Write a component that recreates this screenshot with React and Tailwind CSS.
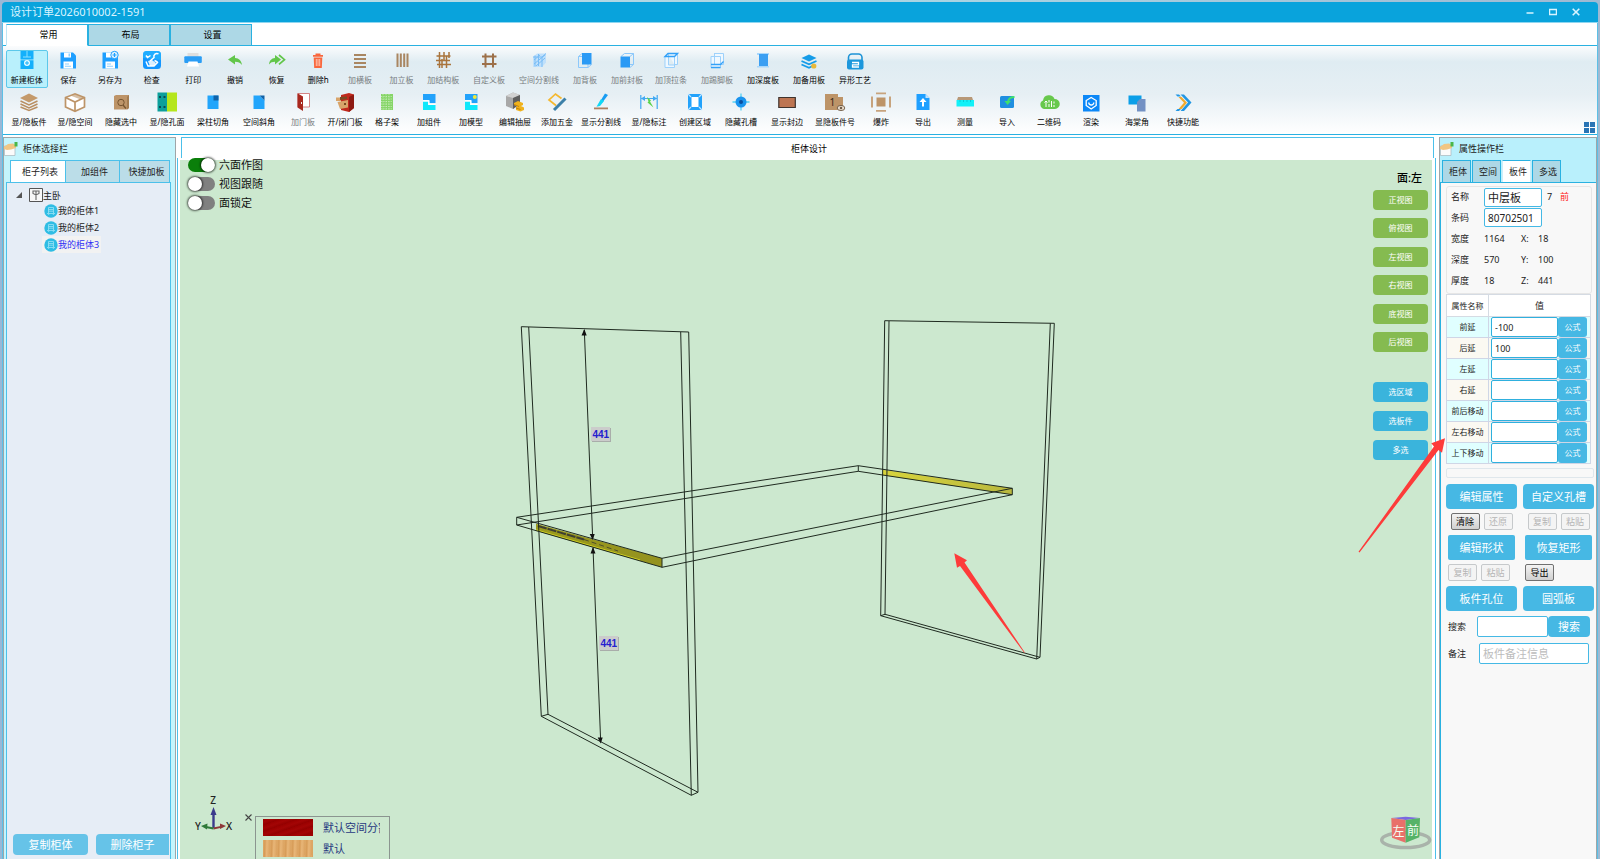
import React, { useState } from "react";

const BROWN = "#a98661";
const BLUE = "#1e9fff";

// All toolbar icons share an 18x18 box
const icons = {
  newCabinet: (
    <>
      <path fill="#14b0fb" d="M2.500 0h13v8.500h-13zM2.500 9.300h13V18h-13z" />
      <path stroke="#8be0ff" strokeWidth="1" d="M9 0v6M5 6h8" />
      <circle cx="9" cy="12" r="3" fill="#e9faff" />
      <path stroke="#14b0fb" d="M7 12h4M9 10v4" />
    </>
  ),
  save: (
    <>
      <path fill={BLUE} d="M1.500 1.500h12.500l3 3v13h-15.500z" />
      <path fill="#fff" d="M5 1.500h7v5h-7zM4.500 10.500h9.500v7h-9.500z" />
      <path fill={BLUE} d="M9.500 2.500h1.500v3h-1.500zM6 12.500h4v1h-4zM6 14.800h6v1h-6z" opacity=".5" />
    </>
  ),
  saveAs: (
    <>
      <path fill={BLUE} d="M1.500 1.500h12.500l3 3v13h-15.500z" />
      <path fill="#fff" d="M5 1.500h6v5h-6zM4.500 10.500h9.500v7h-9.500z" />
      <path fill={BLUE} d="M6 12.500h4v1h-4zM6 14.800h6v1h-6z" opacity=".5" />
      <circle cx="13.500" cy="4" r="3.700" fill="#e3f5ff" stroke={BLUE} strokeWidth="1" />
      <path stroke={BLUE} strokeWidth="1.200" d="M13.500 2v4M11.500 4h4" />
    </>
  ),
  check: (
    <>
      <rect width="18" height="18" rx="3.500" fill="#1496ff" />
      <path fill="#2cc4ff" opacity=".5" d="M3.500 0h11a3.500 3.500 0 0 1 3.500 3.500V9L0 7V3.500A3.500 3.500 0 0 1 3.500 0z" />
      <path fill="none" stroke="#fff" strokeWidth="1.500" d="M3 4.500l1.500 2 3-2M15.500 3a3 3 0 0 0-4.500 3.500L7 10M3 10.500l2 4.500h6l4-4M11.500 9.500l3 1.500" />
      <path fill="#fff" d="M5 10l4-1 4 3-2 3H7z" opacity=".85" />
    </>
  ),
  print: (
    <>
      <path fill="#dedede" d="M3.500 2h11v4h-11z" />
      <rect x=".3" y="5.300" width="17.500" height="6.700" rx="1" fill="#2a9df5" />
      <path fill="#fff" d="M4.500 10.500h9l1.500 5H3z" />
    </>
  ),
  undo: <path fill="#62c64a" d="M2 8.500L9 4v3c4 .2 6.500 2.800 7 7-1.800-2.400-3.800-3.200-7-3.200V13.500z" />,
  redo: (
    <>
      <path fill="#62c64a" d="M13 8.500L7 4v3C3.500 7.200 1.300 9.800 1 13.500c1.600-2 3.400-2.700 6-2.700v2.700z" />
      <path fill="none" stroke="#62c64a" strokeWidth="1.700" d="M11 4l5.500 4.700-5.500 4.700" />
    </>
  ),
  trash: (
    <>
      <path fill="#f9673d" d="M4 4h10v1.800H4zM6.500 2.500h5V4h-5zM4.700 6.500h8.600l-.5 10.500H5.200z" />
      <path stroke="#ffd9cc" d="M7.300 8v7M9 8v7M10.700 8v7" strokeWidth=".8" />
    </>
  ),
  rows: <path fill={BROWN} d="M3 3h12v2H3zM3 7h12v2H3zM3 11h12v2H3zM3 15h12v2H3z" />,
  cols: <path fill={BROWN} d="M3.500 2.500h2v13.500h-2zM6.800 2.500h2v13.500h-2zM10.200 2.500h2v13.500h-2zM13.500 2.500h2v13.500h-2z" />,
  lattice: <path stroke="#a9743c" strokeWidth="1.500" d="M5.500 1v16M10 1v9M12.500 5v12M15 1v6M8 8v9M2.500 5h14M2 9.500h14M3 13.500h14" />,
  hash: <path stroke="#9c7049" strokeWidth="2" d="M5.500 2.500v14M13 2.500v14M2 5.500h14.500M2 13h14.500" />,
  hatchBox: (
    <>
      <path fill="#bfe0fb" d="M3 6l4-3.500h9v9L12 16H3z" />
      <path stroke="#79bdf6" strokeWidth="1" fill="none" d="M3 6h9v10M12 6l4-3.500M4 9l6-5M4 13L15 4M6 15l9-8M5 4.500v11M8.500 3v12" />
    </>
  ),
  boxBack: (
    <>
      <path fill="none" stroke="#8cc8fb" d="M2.500 5.500h9.500v11H2.500zM2.500 5.500L6 2.500M12 16.500l3.500-3" />
      <path fill="#2a9af5" d="M6 2h9.500v11.500H6z" />
    </>
  ),
  boxFront: (
    <>
      <path fill="none" stroke="#8cc8fb" d="M6.500 2.500h9v11h-9M3 5.500l3.500-3M12 5.500l3.500-3M12 16.500l3.500-3" />
      <path fill="#2a9af5" d="M2.500 5.500h9.500v11H2.500z" />
    </>
  ),
  boxTop: (
    <>
      <path fill="#eff8ff" stroke="#9dd1fb" d="M3 5.500h9.500v11H3zM6 2.500h9.500v11h-3M6.500 3v11h6" />
      <path stroke="#33a1f8" strokeWidth="1.400" d="M3 5.500h9.500l3-3H6z" fill="none" />
    </>
  ),
  boxKick: (
    <>
      <path fill="#eff8ff" stroke="#9dd1fb" d="M3 5.500h9.500v11H3zM6 2.500h9.500v11h-3M6.500 3v11" />
      <path stroke="#33a1f8" strokeWidth="1.300" d="M3 13.500h9.500l3-3M3 16.500h9.500" fill="none" />
    </>
  ),
  column: (
    <>
      <path fill="#a9d7fb" d="M3 2h12v2H3zM3 15h12v1.500H3z" />
      <path fill="#3b9ff2" d="M5 3h9v12H5z" />
    </>
  ),
  layersBlue: (
    <>
      <path fill="#159ce8" d="M1.500 7l7.500-3.500L16.500 7 9 10.500z" />
      <path fill="none" stroke="#159ce8" strokeWidth="1.800" d="M1.500 10L9 13.300 16.500 10M1.500 13.500L9 16.800l4-2" />
      <circle cx="13.800" cy="15" r="2.600" fill="#e9b93a" />
    </>
  ),
  basket: (
    <>
      <path fill="none" stroke="#1c93d6" strokeWidth="1.600" d="M2.500 9V6.500a3.500 3.500 0 0 1 3.500-3.500h6.500a3.500 3.500 0 0 1 3.500 3.500V9" />
      <rect x="1" y="8.500" width="16.500" height="10" rx="2" fill="#1c97dc" />
      <path fill="none" stroke="#fff" strokeWidth="1.300" d="M6 11.500h6.500v2.300H6.500V16h6.500" />
    </>
  ),
  layers: (
    <>
      <path fill="#c49a6b" d="M0 5l9-4.500L18 5 9 9.500z" />
      <path fill="none" stroke="#b98f62" strokeWidth="1.500" d="M.5 8L9 12l8.500-4M.5 11L9 15l8.500-4M.5 14L9 17.500 17.500 14" />
    </>
  ),
  cube: (
    <>
      <path fill="#fff" stroke="#bd9468" strokeWidth="1.700" d="M-.5 4.500L9 .8l9.500 3.700V14L9 18.300-.5 14z" />
      <path fill="none" stroke="#bd9468" strokeWidth="1.700" d="M-.5 4.500L9 9l9.500-4.500M9 9v9" />
      <path fill="#bd9468" d="M9 1l9 3.500-4 1.800-9-3.600z" opacity=".6" />
    </>
  ),
  hideSel: (
    <>
      <path fill="#bd9468" d="M2 3l2-1h13v13l-2 1.500H2z" />
      <path fill="#a37c50" d="M15 4l2-2v13l-2 1.500z" />
      <circle cx="9" cy="9.500" r="3.200" fill="none" stroke="#76542f" strokeWidth="1" />
      <path stroke="#76542f" strokeWidth="1.300" d="M11 12l3 3.500" />
    </>
  ),
  holes: (
    <>
      <path fill="#0d9f9b" d="M-.5-.5h9.500v19h-9.500z" />
      <path fill="#b5e61d" d="M9-.5h10v19H9z" />
      <path fill="#0a4a55" d="M1 3h2v2H1zM5.500 3h2v2h-2zM1 13h2v2H1zM5.500 13h2v2h-2z" />
    </>
  ),
  notch: (
    <>
      <path fill="#22a5fb" d="M3.500 2.500h11v13.500h-11z" />
      <path fill="#0f62a8" d="M9.500 2.500h5v5h-5z" />
    </>
  ),
  bevel: (
    <>
      <path fill="#22a5fb" d="M3.500 2.500h6l5 5V16h-11z" />
      <path fill="#0f62a8" d="M9.500 2.500h5v5z" />
    </>
  ),
  door: (
    <>
      <path fill="#fff" stroke="#c66" strokeWidth=".8" d="M4 .5h11.500v13.500H4z" />
      <path fill="#a8281e" d="M3.500.3L9 3.500V18l-5.500-3.500z" />
      <path fill="#eee" d="M7 9h1v2H7z" />
    </>
  ),
  doorOpen: (
    <>
      <path fill="#c0281c" d="M5 2l8-2 5 1.500V15l-5 4-8-2z" />
      <path fill="#8d1a12" d="M13 4l5-2.500V15l-5 4z" />
      <path fill="#d8a46a" d="M0 4.500h5v3.500H0zM1.500 9L12 7v7.500L4 16z" />
      <path fill="#7a4a22" d="M4 4l7-.500v2.500l-7 1zM8 10h2v2H8z" />
    </>
  ),
  grid: (
    <>
      <path fill="#86d568" d="M3 1h12v16H3z" />
      <path stroke="#d4f2c8" strokeWidth=".7" strokeDasharray="1.200 1.200" d="M3 3.500h12M3 6h12M3 8.500h12M3 11h12M3 13.500h12M3 15.800h12M5 1v16M8 1v16M11 1v16" />
    </>
  ),
  component: (
    <>
      <path fill="#22a2fb" d="M3 1h12.500v9H9V7H3z" />
      <path fill="#10e8fb" d="M3 8.500h5V12h7.500v5H3z" />
      <path fill="none" stroke="#fff" strokeWidth="1.200" d="M3 7.800h6v3.700h6.500" />
    </>
  ),
  model: (
    <>
      <path fill="#22a2fb" d="M3 1h12.500v9H9V7H3z" />
      <path fill="#10e8fb" d="M3 8.500h5V12h7.500v5H3z" />
      <path fill="none" stroke="#fff" strokeWidth="1.200" d="M3 7.800h6v3.700h6.500" />
      <circle cx="12.800" cy="4" r="2" fill="#f0e93a" />
    </>
  ),
  drawer: (
    <>
      <path fill="#a8a8a8" d="M0 3l7-3.500L14 2v9l-7 5-7-3z" />
      <path fill="#d2d2d2" d="M0 3l7-3.500L14 2 7 5z" />
      <path fill="#5f5f5f" d="M7 5l7-3v9l-7 5z" />
      <path fill="#f0b21c" d="M8 10l4-2 5 2v2l-4 2-5-2zM10 14l4-1.500 4 2V17l-3.500 1.500L10 17z" />
      <path fill="#c58308" d="M8 12l5 2v-1l-5-2zM10 15.500l4.500 1.500V16L10 14.500z" />
    </>
  ),
  hardware: (
    <>
      <path fill="none" stroke="#f5b82e" strokeWidth="1.700" d="M8 12.500L1 7l6.500-6 6 4.500" />
      <path stroke="#3c80a8" strokeWidth="3" d="M6 17L17.500 5.500" />
    </>
  ),
  splitLine: (
    <>
      <path fill="#189cf2" d="M13 .5l3 1.500-6 8-3.500 1z" />
      <path fill="#10d8f5" d="M9 6l3 2-4 5-3.500.8z" />
      <path fill="#ad7f5f" d="M2 14.500h14v1.800H2z" />
    </>
  ),
  dimension: (
    <>
      <path stroke="#41a9f2" strokeWidth="1.200" d="M.8 2v14M17.200 2v14M1.500 5.500h15" />
      <path fill="#41a9f2" d="M1 5.500l4-2.500v5zM17 5.500L13 3v5z" />
      <path fill="#5bd34c" d="M7 4l4 3.500-1 1 3.500 6-6-5 1-1z" />
    </>
  ),
  region: (
    <>
      <path fill="#22a2fb" d="M2 1h14v16H2z" />
      <path fill="#fff" d="M5.500 4h7v10h-7z" />
      <path stroke="#bfe4ff" strokeWidth="1.200" d="M2 1l3 3M16 1l-3 3M2 17l3-3M16 17l-3-3" />
    </>
  ),
  slot: (
    <>
      <path stroke="#55d2f5" strokeWidth="1.300" d="M9 .5v17M.5 9h17" />
      <circle cx="9" cy="9" r="5.500" fill="#1a94ee" />
      <circle cx="9" cy="9" r="2" fill="#0a4f9e" />
    </>
  ),
  edge: <path fill="#bd7552" stroke="#3f342e" strokeWidth="1.200" d="M.8 4.500h16.500v10H.8z" />,
  boardNo: (
    <>
      <path fill="#bd9468" d="M-1 1h13v3h5v13H-1z" />
      <text x="3.500" y="12.500" fontSize="10" fill="#33251a">1</text>
      <ellipse cx="15" cy="15" rx="3.800" ry="2.600" fill="#e6d9c8" stroke="#6f5b46" strokeWidth=".9" />
      <circle cx="15" cy="15" r="1.200" fill="#6f5b46" />
    </>
  ),
  explode: (
    <>
      <path fill="#bd9468" d="M4.500 4.500h9v9h-9z" />
      <path fill="#c7a37d" d="M4-.5h10v1.800H4zM4 17h10v1.800H4zM-1 3.500h2v11h-2zM17 3.500h2v11h-2z" />
    </>
  ),
  exportFile: (
    <>
      <path fill={BLUE} d="M2.500 1h9l4 4v12h-13z" />
      <path fill="#bfe2ff" d="M11.500 1l4 4h-4z" />
      <path fill="#fff" d="M9 5l3.500 4H10v4.500H8V9H5.500z" />
    </>
  ),
  measure: (
    <>
      <path fill="#b79877" d="M2 4h14l1 3H1z" />
      <path fill="#12f1f8" d="M.5 7h17.500v6.500H.5z" />
      <path stroke="#06b9c6" strokeWidth=".7" d="M4 7v2M7.500 7v2M11 7v2M14.500 7v2" />
    </>
  ),
  importFile: (
    <>
      <rect x="2" y="3" width="14" height="12" rx="1.500" fill="#1f8fe0" />
      <path fill="none" stroke="#3fe06c" strokeWidth="2" d="M16.500 4c-4 0-6 1-6.500 5" />
      <path fill="#3fe06c" d="M6.500 8h6.500L9.500 12z" />
    </>
  ),
  qrCloud: (
    <>
      <path fill="#67c84c" d="M4 16a4.500 4.500 0 0 1-1-8.500A6 6 0 0 1 14.500 6 5 5 0 0 1 15 16z" />
      <path stroke="#fff" strokeWidth="1" d="M6 14V8M4.500 9.500L6 8l1.500 1.500M9 7v2.500M9 11v3M11.500 8v6M14 8.500v2M14 12v2" />
    </>
  ),
  render: (
    <>
      <path fill="#0b87f7" d="M1 2h16.500v16.500H1z" />
      <path fill="none" stroke="#fff" strokeWidth="1.300" d="M9.200 4.500l5 3v5l-5 3.500-5-3.500v-5z" />
      <path fill="none" stroke="#fff" strokeWidth="1.300" d="M6.800 9.500a2.500 2.500 0 0 0 5 0" />
    </>
  ),
  begonia: (
    <>
      <path fill="#0b9fe8" d="M.5 2.500h13v9H.5z" />
      <path fill="#7391c4" d="M12 6h5.500v12.500H9V9z" />
    </>
  ),
  chevrons: (
    <>
      <path fill="#2196e3" d="M6.500 1.500h3.500l7.500 8-7.500 8.500H6.500l7.500-8.500z" />
      <path fill="#f0a92c" d="M4.500 4h3l5.500 5.700L7.500 16h-3l5.500-6.300z" />
      <path fill="#2196e3" d="M1.500 1.500h3.500l2 2H3.500zM1.500 18h3.500l2-2H3.500z" />
    </>
  ),
};

const toolsStart = [
  { label: "新建柜体", icon: "newCabinet", active: true },
  { label: "保存", icon: "save" },
  { label: "另存为", icon: "saveAs" },
  { label: "检查", icon: "check" },
  { label: "打印", icon: "print" },
  { label: "撤销", icon: "undo" },
  { label: "恢复", icon: "redo" },
  { label: "删除h", icon: "trash" },
  { label: "加横板", icon: "rows", disabled: true },
  { label: "加立板", icon: "cols", disabled: true },
  { label: "加结构板", icon: "lattice", disabled: true },
];

const toolsBoards = [
  { label: "自定义板", icon: "hash", disabled: true, width: "w-[50px]" },
  { label: "空间分割线", icon: "hatchBox", disabled: true, width: "w-[50px]" },
  { label: "加背板", icon: "boxBack", disabled: true, width: "w-[42px]" },
  { label: "加前封板", icon: "boxFront", disabled: true, width: "w-[42px]" },
  { label: "加顶拉条", icon: "boxTop", disabled: true, width: "w-[46px]" },
  { label: "加踢脚板", icon: "boxKick", disabled: true, width: "w-[46px]" },
  { label: "加深度板", icon: "column", width: "w-[46px]" },
  { label: "加备用板", icon: "layersBlue", width: "w-[46px]" },
  { label: "异形工艺", icon: "basket", width: "w-[46px]" },
];

const toolsSecond = [
  { label: "显/隐板件", icon: "layers", width: "w-[46px]" },
  { label: "显/隐空间", icon: "cube", width: "w-[46px]" },
  { label: "隐藏选中", icon: "hideSel", width: "w-[46px]" },
  { label: "显/隐孔面", icon: "holes", width: "w-[46px]" },
  { label: "梁柱切角", icon: "notch", width: "w-[46px]" },
  { label: "空间斜角", icon: "bevel", width: "w-[46px]" },
  { label: "加门板", icon: "door", disabled: true, width: "w-[42px]" },
  { label: "开/闭门板", icon: "doorOpen", width: "w-[42px]" },
  { label: "格子架", icon: "grid", width: "w-[42px]" },
  { label: "加组件", icon: "component", width: "w-[42px]" },
  { label: "加模型", icon: "model", width: "w-[42px]" },
  { label: "编辑抽屉", icon: "drawer", width: "w-[46px]" },
  { label: "添加五金", icon: "hardware", width: "w-[38px]" },
  { label: "显示分割线", icon: "splitLine", width: "w-[50px]" },
  { label: "显/隐标注", icon: "dimension", width: "w-[46px]" },
  { label: "创建区域", icon: "region", width: "w-[46px]" },
  { label: "隐藏孔槽", icon: "slot", width: "w-[46px]" },
  { label: "显示封边", icon: "edge", width: "w-[46px]" },
  { label: "显隐板件号", icon: "boardNo", width: "w-[50px]" },
  { label: "爆炸", icon: "explode", width: "w-[42px]" },
  { label: "导出", icon: "exportFile", width: "w-[42px]" },
  { label: "测量", icon: "measure", width: "w-[42px]" },
  { label: "导入", icon: "importFile", width: "w-[42px]" },
  { label: "二维码", icon: "qrCloud", width: "w-[42px]" },
  { label: "渲染", icon: "render", width: "w-[42px]" },
  { label: "海棠角", icon: "begonia", width: "w-[50px]" },
  { label: "快捷功能", icon: "chevrons", width: "w-[42px]" },
];

const ToolButton = ({ label, icon, active, disabled, width = "w-full" }) => (
  <button
    disabled={disabled}
    className={`flex h-[38px] shrink-0 flex-col items-center gap-[6px] rounded-[2px] border text-[8px] leading-[10px] whitespace-nowrap ${width} ${
      active ? "border-[#5cc8ea] bg-[#b9f0fc]" : "border-transparent"
    } ${disabled ? "text-[#777c80]" : "text-black"}`}
  >
    <svg viewBox="0 0 18 18" fill="none" className="h-[18px] w-[18px] overflow-visible">
      {icons[icon]}
    </svg>
    {label}
  </button>
);

const TitleBar = () => (
  <header className="flex h-[21px] shrink-0 items-center justify-between rounded-t-[4px] border-b border-[#8fd6f0] bg-[#09a3dc] pr-[11px] pl-2 text-white">
    <h1 className="text-[11px] leading-[20px] text-[#d9f4ff]">设计订单2026010002-1591</h1>
    <div className="flex">
      <button aria-label="最小化" className="flex h-5 w-[23px] items-center justify-center">
        <svg viewBox="0 0 8 8" className="h-2 w-2"><path d="M.5 5h7" stroke="#d9f4ff" strokeWidth="1.500" /></svg>
      </button>
      <button aria-label="最大化" className="flex h-5 w-[23px] items-center justify-center">
        <svg viewBox="0 0 8 8" className="h-2 w-2"><path d="M.5 1.500h7v5h-7z" fill="none" stroke="#d9f4ff" strokeWidth="1.500" /></svg>
      </button>
      <button aria-label="关闭" className="flex h-5 w-[23px] items-center justify-center">
        <svg viewBox="0 0 8 8" className="h-2 w-2"><path d="M.7.7l6.600 6.600M7.300.7L.7 7.300" stroke="#d9f4ff" strokeWidth="1.600" /></svg>
      </button>
    </div>
  </header>
);

const Ribbon = () => {
  const [tab, setTab] = useState("常用");
  return (
    <div className="shrink-0 bg-white">
      <nav className="flex h-[23px] border-b border-[#29b1e1] pt-[1px] pl-[3px]">
        {["常用", "布局", "设置"].map((name) => (
          <button
            key={name}
            onClick={() => setTab(name)}
            className={`-mb-px w-[82px] border border-[#29b1e1] pl-[3px] text-[9px] leading-[12px] text-black ${
              tab === name ? "border-b-white border-l-[#bfe6f5] bg-white" : "bg-[#add8e6]"
            }`}
          >
            {name}
          </button>
        ))}
      </nav>
      <div className="relative flex flex-col gap-1 border-b border-[#29b1e1] bg-[linear-gradient(to_bottom,#fbfcfd,#dfecf2_18%,#e6eff4_55%,#ffffff)] py-1 pl-[3px]">
        <div className="flex">
          <div className="grid w-[458px] shrink-0 grid-cols-11">
            {toolsStart.map((t) => (
              <ToolButton key={t.label} {...t} />
            ))}
          </div>
          {toolsBoards.map((t) => (
            <ToolButton key={t.label} {...t} />
          ))}
        </div>
        <div className="flex">
          {toolsSecond.map((t) => (
            <ToolButton key={t.label} {...t} />
          ))}
        </div>
        <button aria-label="面板" className="absolute right-[2px] bottom-[1px]">
          <svg viewBox="0 0 11 11" className="h-[11px] w-[11px]">
            <path fill="#2a75b5" d="M0 0h5v5H0zM6 0h5v5H6zM0 6h5v5H0zM6 6h5v5H6z" />
          </svg>
        </button>
      </div>
    </div>
  );
};

const PanelHeader = ({ title }) => (
  <div className="flex h-[22px] shrink-0 items-center gap-[5px]">
    <svg viewBox="0 0 14 14" className="h-[14px] w-[14px] overflow-visible">
      <path fill="#fbfbfb" stroke="#a9b6bb" strokeWidth=".7" d="M.5 4h10.500v9.500H.5z" />
      <path fill="#f1c683" d="M0 5l4-3 5-.500 3 1.500v3L7 7.500 3 8 0 7z" />
      <path fill="#49b649" d="M10.500 0h3v4.500h-3z" />
    </svg>
    <h2 className="text-[9px] leading-[12px] text-[#222]">{title}</h2>
  </div>
);

const CabinetIcon = () => (
  <svg viewBox="0 0 14 14" className="h-[14px] w-[14px] shrink-0">
    <circle cx="7" cy="7" r="6.700" fill="#2fbde4" />
    <path fill="none" stroke="#9be2f5" strokeWidth=".8" d="M4.500 9V3.500h5V9M4.500 5.500h5M4.500 7.200h5M3 9.500h8M5 9.500L4.500 11M9 9.500l.5 1.500" />
  </svg>
);

const LeftPanel = () => {
  const [selected, setSelected] = useState("我的柜体3");
  return (
    <aside className="flex w-[173px] shrink-0 flex-col border border-b-0 border-[#9fa5a8] bg-[#c4f4fc]">
      <PanelHeader title="柜体选择栏" />
      <div className="flex h-[22px] shrink-0 pl-[6px] text-[9px] leading-[12px] text-[#222]">
        <button className="w-[56px] border border-b-0 border-[#4cc0ea] bg-white pl-1">柜子列表</button>
        <button className="w-[54px] border border-b-0 border-l-0 border-[#4cc0ea] bg-[#bbdde8] pl-1">加组件</button>
        <button className="w-[50px] border border-b-0 border-l-0 border-[#4cc0ea] bg-[#bbdde8] pl-1">快捷加板</button>
      </div>
      <div className="mr-[4px] ml-[2px] flex grow flex-col border border-b-0 border-[#4cc0ea] bg-[#e6edf6] text-[9px] leading-[13px] text-[#222]">
        <div className="flex items-center pt-[5px] pl-[9px]">
          <svg viewBox="0 0 6 6" className="mr-[7px] h-[6px] w-[6px]"><path fill="#555" d="M6 0v6H0z" /></svg>
          <svg viewBox="0 0 14 14" className="h-[14px] w-[14px]">
            <path fill="#f7f7f7" stroke="#555" d="M.5.5h13v13H.5z" />
            <path fill="none" stroke="#666" strokeWidth="1.100" d="M4 3h6v2.500L7 7 4 5.500zM7 3v9" />
          </svg>
          主卧
        </div>
        <ul className="ml-[35px] flex flex-col items-start">
          {["我的柜体1", "我的柜体2", "我的柜体3"].map((name) => (
            <li key={name}>
              <button
                onClick={() => setSelected(name)}
                className={`flex h-[17px] items-center pr-[2px] pl-[2px] ${
                  selected === name ? "bg-[#f2f2f2] text-[#2f2ff5]" : ""
                }`}
              >
                <CabinetIcon />
                {name}
              </button>
            </li>
          ))}
        </ul>
        <div className="mt-auto mb-1 flex gap-2 pl-[6px] text-[11px] leading-[21px] text-white">
          <button className="w-[75px] rounded-[4px] bg-[#66c3e8]">复制柜体</button>
          <button className="w-[73px] rounded-l-[4px] bg-[#66c3e8]">删除柜子</button>
        </div>
      </div>
    </aside>
  );
};

// Wireframe of the two side boards with the middle shelf
const Scene = () => (
  <svg viewBox="180 160 1252 699" preserveAspectRatio="xMidYMid meet" className="absolute inset-0 h-full w-full">
    <defs>
      <linearGradient id="shelfLeft" x1="0" x2="1">
        <stop offset="0" stopColor="#9b9a1c" />
        <stop offset="1" stopColor="#94921f" />
      </linearGradient>
      <linearGradient id="shelfRight" x1="0" x2="1">
        <stop offset="0" stopColor="#d8d43c" />
        <stop offset="1" stopColor="#b9b83f" />
      </linearGradient>
    </defs>
    <path fill="url(#shelfLeft)" d="M536 523.700L662 558.300V567.300L536 530.700z" />
    <path stroke="#cfd022" strokeWidth="1.200" d="M536 529.800L640 560" />
    <path stroke="#3e3f32" strokeWidth="2" strokeDasharray="9 1" d="M538 526L584 539.500" />
    <path stroke="#4e4e2c" strokeWidth="1" strokeDasharray="5 3" d="M584 539.500L618 551" />
    <path fill="url(#shelfRight)" d="M882.700 469.700L1012.300 488.300V494.700L882.700 475.300z" />
    <g fill="none" stroke="#1f2a20" strokeWidth="1">
      <path d="M521.300 326.700L688.700 332L698 792.300L691.300 795.300L541.300 716.300z" />
      <path d="M528.700 327L548 714.300L698 792.300M541.300 716.300L548 714.300M680.700 332L691.300 795.300" />
      <path d="M884.700 320.700L1054.300 323.300L1040 657.300L1036.700 659L880.700 615.700z" />
      <path d="M889 321L885 614.300L1040 657.300M880.700 615.700L885 614.300M1050.300 323.300L1036.700 659" />
      <path d="M516.700 517.300L858.300 465.700L1012.300 488.300L662 558.300zM516.700 525L858.300 471.300L1012.300 494.700L662 567.300z" />
      <path d="M516.700 517.300V525M858.300 465.700V471.300M1012.300 488.300V494.700M662 558.300V567.300" />
      <path d="M584.300 330L592.700 538.700M593 548L600.700 742" />
    </g>
    <path fill="#111" d="M584.300 329l-2.800 6.500h5.200zM592.700 540l-3-6h5zM593 547l-2.500 6.500h5zM600.700 743.500l-3-6h5z" />
    <g fontFamily="Liberation Sans, sans-serif" fontSize="10" fontWeight="700" fill="#2420cf">
      <rect x="592" y="428" width="19" height="14" fill="#a9adaa" />
      <rect x="591" y="427" width="19" height="14" fill="#cbcccb" />
      <text x="592.500" y="438">441</text>
      <rect x="600" y="637" width="19" height="14" fill="#a9adaa" />
      <rect x="599" y="636" width="19" height="14" fill="#cbcccb" />
      <text x="600.500" y="647">441</text>
    </g>
    {/* axis gizmo */}
    <path stroke="#3a3a8c" strokeWidth="2.400" d="M213.500 828V812" />
    <path fill="#3a3a8c" d="M213.500 807l-3 8h6z" />
    <path stroke="#8e3838" strokeWidth="1.800" d="M213.500 828.500L221 826.800" />
    <path fill="#8e3838" d="M226 826l-6-2.500v5.500z" />
    <path stroke="#2f7a3a" strokeWidth="1.800" d="M213.500 828.500L206 827" />
    <path fill="#2f7a3a" d="M201 826l6.500-2.500-.5 6z" />
    <g fontSize="10" fontWeight="500" fill="#222" textAnchor="middle">
      <text x="213" y="804">Z</text>
      <text x="198" y="830">Y</text>
      <text x="229" y="830">X</text>
    </g>
    {/* view cube */}
    <ellipse cx="1405.700" cy="840" rx="24" ry="7.500" fill="none" stroke="#a9b3aa" strokeWidth="3.500" />
    <path fill="#7a68e0" d="M1391.300 818L1405.700 816.800L1420 818L1405.700 820z" />
    <path fill="#e8706a" d="M1391.300 818L1405.700 820V842.700L1392 837.700z" />
    <path fill="#55b368" d="M1405.700 820L1420 818L1419.300 837.300L1405.700 842.700z" />
    <g fontSize="12" fill="#f4fff4" textAnchor="middle">
      <text x="1398.500" y="836">左</text>
      <text x="1413" y="835">前</text>
    </g>
  </svg>
);

const Toggle = ({ label, defaultChecked }) => (
  <label className="flex h-[19px] items-center gap-1 text-[11px] leading-[14px] text-[#111]">
    <input
      type="checkbox"
      defaultChecked={defaultChecked}
      className="h-[14px] w-[27px] appearance-none rounded-full bg-[#808080] before:block before:h-[14px] before:w-[14px] before:rounded-full before:bg-white before:shadow-[0_0_2px_1px_rgba(0,0,0,0.6)] checked:bg-[#0a7f0a] checked:before:ml-[13px]"
    />
    {label}
  </label>
);

const Viewport = () => (
  <main className="ml-[1px] flex min-w-0 grow flex-col">
    <div className="mr-[2px] ml-1 h-[21px] shrink-0 border border-b-0 border-[#4cc0ea] bg-white pl-[3px] text-center text-[9px] leading-[21px] text-black">
      柜体设计
    </div>
    <div className="flex grow flex-col border-x border-[#4cc0ea] pt-[2px] pr-[3px] pl-[2px]">
      <div className="relative grow bg-[#cce8cf]">
        <Scene />
        <div className="absolute -top-[5px] left-2">
          <Toggle label="六面作图" defaultChecked />
          <Toggle label="视图跟随" />
          <Toggle label="面锁定" />
        </div>
        <div className="absolute top-[10px] right-1 w-[55px] text-[8px] leading-[20px] text-white">
          <p className="mb-[5px] pr-[6px] text-right text-[11px] leading-[15px] font-medium text-black">面:左</p>
          <div className="flex h-[162px] flex-col justify-between">
            {["正视图", "俯视图", "左视图", "右视图", "底视图", "后视图"].map((v) => (
              <button key={v} className="rounded-[4px] bg-[#85bb50]">{v}</button>
            ))}
          </div>
          <div className="mt-[30px] flex flex-col gap-[9px]">
            {["选区域", "选板件", "多选"].map((v) => (
              <button key={v} className="rounded-[4px] bg-[#3ab4dc]">{v}</button>
            ))}
          </div>
        </div>
        <button aria-label="关闭图例" className="absolute bottom-[38px] left-[65px]">
          <svg viewBox="0 0 7 7" className="h-[7px] w-[7px]"><path stroke="#444" strokeWidth="1.100" d="M.5.5l6 6M6.500.5l-6 6" /></svg>
        </button>
        <div className="absolute bottom-0 left-[75px] flex w-[135px] flex-col gap-1 border border-b-0 border-[#8b9590] px-[7px] pt-[2px] pb-[2px] text-[11px] leading-[17px] whitespace-nowrap text-[#28397f]">
          <div className="flex gap-[10px]">
            <span className="w-[50px] shrink-0 bg-[repeating-linear-gradient(160deg,#9a0000,#a30505_3px,#930000_6px)]" />
            <span className="w-[57px] overflow-hidden">默认空间分割线</span>
          </div>
          <div className="flex gap-[10px]">
            <span className="w-[50px] shrink-0 bg-[repeating-linear-gradient(92deg,#e0aa68,#d79c58_2px,#e8b678_4px,#dca462_7px)]" />
            <span>默认</span>
          </div>
        </div>
      </div>
    </div>
  </main>
);

const offsets = [
  { name: "前延", value: "-100" },
  { name: "后延", value: "100" },
  { name: "左延", value: "" },
  { name: "右延", value: "" },
  { name: "前后移动", value: "" },
  { name: "左右移动", value: "" },
  { name: "上下移动", value: "" },
];

const PrimaryButton = ({ children, small }) => (
  <button
    className={`h-[25px] bg-[#46b8e4] text-[11px] leading-[14px] text-white ${
      small ? "mx-[2px] rounded-[2px]" : "rounded-[4px]"
    }`}
  >
    {children}
  </button>
);

const MiniButton = ({ children, disabled }) => (
  <button
    disabled={disabled}
    className={`h-[17px] w-[29px] rounded-[2px] border text-[9px] leading-[13px] ${
      disabled
        ? "border-[#c6c9cb] bg-[#f4f4f4] text-[#b4b4b4]"
        : "border-[#707070] bg-[linear-gradient(to_bottom,#f3f3f3,#d0d0d0)] text-black"
    }`}
  >
    {children}
  </button>
);

const RightPanel = () => {
  const [tab, setTab] = useState("板件");
  return (
    <aside className="ml-[3px] flex w-[158px] shrink-0 flex-col border border-b-0 border-[#9fa5a8] bg-[#b9f0fc]">
      <PanelHeader title="属性操作栏" />
      <div className="flex h-[22px] shrink-0 gap-[1px] pl-[2px] text-[9px] leading-[12px] text-[#222]">
        {["柜体", "空间", "板件", "多选"].map((name) => (
          <button
            key={name}
            onClick={() => setTab(name)}
            className={`w-[29px] border border-b-0 border-[#29b1e1] pl-[3px] ${
              tab === name ? "border-x-[#cdeefa] bg-white" : "bg-[#add8e6]"
            }`}
          >
            {name}
          </button>
        ))}
      </div>
      <div className="flex grow flex-col border-t border-l border-[#29b1e1] bg-[#f8f8f8] pt-[3px] pr-[2px] pl-[5px] text-[9px] leading-[12px] text-[#222]">
        <section className="mr-[2px] rounded-[3px] border border-[#e6e6e6] pb-[2px] pl-1">
          <div className="flex h-[20px] items-center">
            <label htmlFor="board-name" className="w-[33px]">名称</label>
            <input id="board-name" defaultValue="中层板" className="h-[19px] w-[58px] rounded-[2px] border border-[#45b9e5] bg-white px-[3px] text-[11px] leading-[14px]" />
            <span className="ml-[5px] w-[13px]">7</span>
            <span className="text-[#ff1a1a]">前</span>
          </div>
          <div className="flex h-[21px] items-center">
            <label htmlFor="board-code" className="w-[33px]">条码</label>
            <input id="board-code" defaultValue="80702501" className="h-[19px] w-[58px] rounded-[2px] border border-[#45b9e5] bg-white px-[3px] text-[10px] leading-[14px]" />
          </div>
          {[
            ["宽度", "1164", "X:", "18"],
            ["深度", "570", "Y:", "100"],
            ["厚度", "18", "Z:", "441"],
          ].map(([name, size, axis, pos]) => (
            <div key={name} className="flex h-[21px] items-center">
              <span className="w-[33px]">{name}</span>
              <span className="w-[37px]">{size}</span>
              <span className="w-[17px]">{axis}</span>
              <span>{pos}</span>
            </div>
          ))}
        </section>

        <table className="mr-[3px] table-fixed border-collapse bg-white">
          <thead>
            <tr className="h-[22px]">
              <th className="w-[42px] border border-[#d5dbe3] text-[8px] font-normal whitespace-nowrap">属性名称</th>
              <th className="border border-[#d5dbe3] font-normal">值</th>
            </tr>
          </thead>
          <tbody>
            {offsets.map((row, i) => (
              <tr key={row.name} className={`h-[21px] ${i % 2 ? "bg-[#fbf9f2]" : "bg-[#e0ffff]"}`}>
                <td className="border border-[#cfd6e6] p-0 text-center text-[8px] whitespace-nowrap">
                  <label htmlFor={`offset-${i}`}>{row.name}</label>
                </td>
                <td className="border border-[#cfd6e6] p-0">
                  <div className="flex pl-[2px]">
                    <input id={`offset-${i}`} defaultValue={row.value} className="h-[20px] w-[67px] rounded-[2px] border border-[#2fb0de] bg-white px-[3px] text-[9px] leading-[12px]" />
                    <button className="h-[20px] w-[29px] rounded-[3px] bg-[#46b8e4] text-[8px] text-white">公式</button>
                  </div>
                </td>
              </tr>
            ))}
          </tbody>
        </table>
        <div className="mt-1 mb-[6px] h-[10px] rounded-[2px] border border-[#dfe7ec]" />

        <div className="grid grid-cols-2 gap-x-[6px] gap-y-1">
          <PrimaryButton>编辑属性</PrimaryButton>
          <PrimaryButton>自定义孔槽</PrimaryButton>
          <div className="flex h-[18px] justify-center gap-1">
            <MiniButton>清除</MiniButton>
            <MiniButton disabled>还原</MiniButton>
          </div>
          <div className="flex h-[18px] justify-center gap-1">
            <MiniButton disabled>复制</MiniButton>
            <MiniButton disabled>粘贴</MiniButton>
          </div>
          <PrimaryButton small>编辑形状</PrimaryButton>
          <PrimaryButton small>恢复矩形</PrimaryButton>
          <div className="flex h-[18px] gap-1 pl-[2px]">
            <MiniButton disabled>复制</MiniButton>
            <MiniButton disabled>粘贴</MiniButton>
          </div>
          <div className="flex h-[18px] gap-1 pl-[2px]">
            <MiniButton>导出</MiniButton>
          </div>
          <PrimaryButton>板件孔位</PrimaryButton>
          <PrimaryButton>圆弧板</PrimaryButton>
        </div>

        <div className="mt-[5px] flex items-center pl-[2px]">
          <label htmlFor="search" className="w-[29px]">搜索</label>
          <input id="search" className="h-[21px] w-[71px] rounded-[2px] border border-[#45b9e5] bg-white px-[3px] text-[11px]" />
          <button className="h-[21px] w-[42px] rounded-[4px] bg-[#46b8e4] text-[11px] text-white">搜索</button>
        </div>
        <div className="mt-[6px] flex items-center pl-[2px]">
          <label htmlFor="remark" className="w-[31px]">备注</label>
          <input id="remark" placeholder="板件备注信息" className="h-[21px] w-[110px] rounded-[2px] border border-[#45b9e5] bg-white px-[3px] text-[11px] placeholder:text-[#bcbcbc]" />
        </div>
      </div>
    </aside>
  );
};

// Red pointer arrows drawn over the workspace
const Annotations = () => (
  <svg viewBox="0 0 1600 859" className="pointer-events-none absolute inset-0 h-full w-full" fill="#fd3b3a">
    <path d="M954.300 553.300L967 560.300L964.500 562.500L1025 652.700L1024 652.500L960 566L957 567.700z" />
    <path d="M1445 438.300L1442 452.700L1438.500 450L1359.500 552.500L1358.500 551.800L1434 446.500L1431.300 443.300z" />
  </svg>
);

const App = () => (
  <div className="relative flex h-screen flex-col overflow-hidden bg-[linear-gradient(to_right,#9ab8d6,#b7dbe6_20%,#a9d3e2_60%,#9fb9d2)] px-[2px] pt-[2px] font-['Noto_Sans','Noto_Sans_CJK_SC',sans-serif]">
    <TitleBar />
    <div className="flex min-h-0 grow flex-col border-x border-[#5cc0e6] bg-white">
      <Ribbon />
      <div className="flex min-h-0 grow pt-[2px]">
        <LeftPanel />
        <Viewport />
        <RightPanel />
      </div>
    </div>
    <Annotations />
  </div>
);

export default App;
